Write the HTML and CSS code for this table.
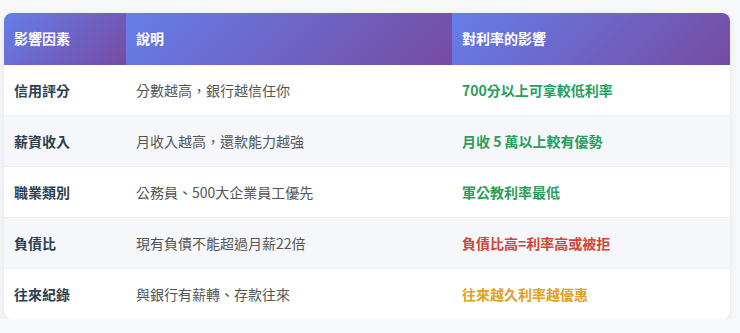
FILE: index.html
```html
<!DOCTYPE html>
<html lang="zh-Hant">
<head>
<meta charset="utf-8">
<title>影響利率因素</title>
<link rel="stylesheet" href="styles.css">
</head>
<body>
<div class="wrap">
  <table class="factors">
    <colgroup>
      <col class="c1"><col class="c2"><col class="c3">
    </colgroup>
    <thead>
      <tr><th>影響因素</th><th>說明</th><th>對利率的影響</th></tr>
    </thead>
    <tbody>
      <tr><td class="name">信用評分</td><td class="desc">分數越高，銀行越信任你</td><td class="eff good">700分以上可拿較低利率</td></tr>
      <tr><td class="name">薪資收入</td><td class="desc">月收入越高，還款能力越強</td><td class="eff good">月收 5 萬以上較有優勢</td></tr>
      <tr><td class="name">職業類別</td><td class="desc">公務員、500大企業員工優先</td><td class="eff good">軍公教利率最低</td></tr>
      <tr><td class="name">負債比</td><td class="desc">現有負債不能超過月薪22倍</td><td class="eff bad">負債比高=利率高或被拒</td></tr>
      <tr><td class="name">往來紀錄</td><td class="desc">與銀行有薪轉、存款往來</td><td class="eff warn">往來越久利率越優惠</td></tr>
    </tbody>
  </table>
</div>
</body>
</html>
```

FILE: styles.css
```css
html, body {
  margin: 0;
  padding: 0;
  background: #f7f8fa;
  font-family: "Noto Sans CJK TC", "Noto Sans", sans-serif;
}
.wrap {
  padding: 13px 10px 0 4px;
}
.factors {
  width: 726px;
  border-collapse: separate;
  border-spacing: 0;
  table-layout: fixed;
  background: #fff;
  border-radius: 8px;
  overflow: hidden;
  box-shadow: 0 2px 8px rgba(0, 0, 0, 0.08);
  font-size: 14px;
  line-height: 21px;
}
.c1 { width: 122px; }
.c2 { width: 326px; }
.c3 { width: 278px; }
.factors th {
  background: linear-gradient(135deg, #667eea 0%, #764ba2 100%);
  color: #fff;
  font-weight: 600;
  text-align: left;
  padding: 15px 10px 16px 10px;
}
.factors td {
  padding: 15px 10px 14px 10px;
  border-top: 1px solid #eef0f3;
}
.factors tbody tr:first-child td { border-top: none; padding-top: 15px; }
.factors tbody tr:nth-child(even) td { background: #f5f7fa; }
.name { color: #2c3e50; font-weight: 600; }
.desc { color: #555; padding-left: 11px; }
.eff { font-weight: 600; }
.good { color: #2a9d5c; }
.bad { color: #d04537; }
.warn { color: #e0a020; }
```
